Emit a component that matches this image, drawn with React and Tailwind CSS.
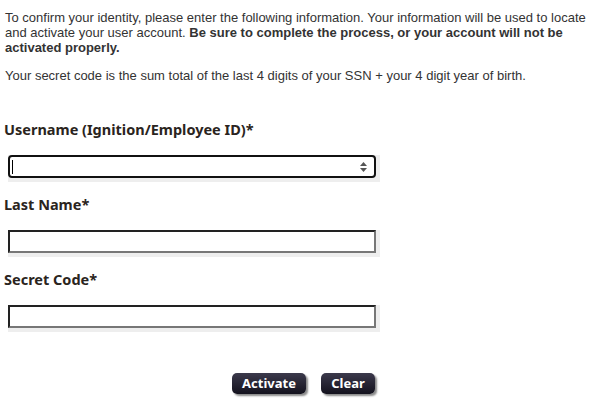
export default function App() {
  const label = "font-['Noto_Sans',sans-serif] font-bold text-[14.5px] leading-[18px] text-[#2a2420] pl-[4px]";
  const box = "bg-[#eeeeee] pr-[4px] pb-[4px] w-[372px] ml-[8px]";
  const btn = "h-[21px] rounded-[5px] bg-gradient-to-b from-[#3c3a4c] to-[#14121e] text-white font-['Noto_Sans',sans-serif] font-bold text-[13px] leading-[21px] shadow-[2px_2px_2px_#8a8a8a]";
  return (
    <div className="w-[611px] h-[407px] bg-white overflow-hidden">
      <div className="px-[5px] pt-[10px] font-['Liberation_Sans',Arial,sans-serif] text-[13px] leading-[15px] text-[#333333]">
        <p>
          To confirm your identity, please enter the following information. Your information will be used to locate and activate your user account.{" "}
          <b className="font-bold">Be sure to complete the process, or your account will not be activated properly.</b>
        </p>
        <p className="mt-[13px]">Your secret code is the sum total of the last 4 digits of your SSN + your 4 digit year of birth.</p>
      </div>

      <div className="mt-[37px] flex flex-col">
        <div className={label}>Username (Ignition/Employee ID)*</div>
        <div className={box + " mt-[17px]"}>
          <div className="h-[23px] border-2 border-[#111111] rounded-[4px] bg-white flex items-center justify-between pl-[2px] pr-[6px]">
            <div className="w-px h-[14px] bg-black" />
            <svg width="9" height="12" viewBox="0 0 9 12">
              <path d="M4.5 1 L8 5 L1 5 Z" fill="#555" />
              <path d="M1 7 L8 7 L4.5 11 Z" fill="#555" />
            </svg>
          </div>
        </div>

        <div className={label + " mt-[13px]"}>Last Name*</div>
        <div className={box + " mt-[17px]"}>
          <div className="h-[23px] border-2 border-t-[#222222] border-l-[#222222] border-b-[#777777] border-r-[#777777] bg-white" />
        </div>

        <div className={label + " mt-[13px]"}>Secret Code*</div>
        <div className={box + " mt-[17px]"}>
          <div className="h-[23px] border-2 border-t-[#222222] border-l-[#222222] border-b-[#777777] border-r-[#777777] bg-white" />
        </div>

        <div className="mt-[41px] flex gap-[15px] pl-[232px]">
          <button className={btn + " w-[74px]"}>Activate</button>
          <button className={btn + " w-[54px]"}>Clear</button>
        </div>
      </div>
    </div>
  );
}
